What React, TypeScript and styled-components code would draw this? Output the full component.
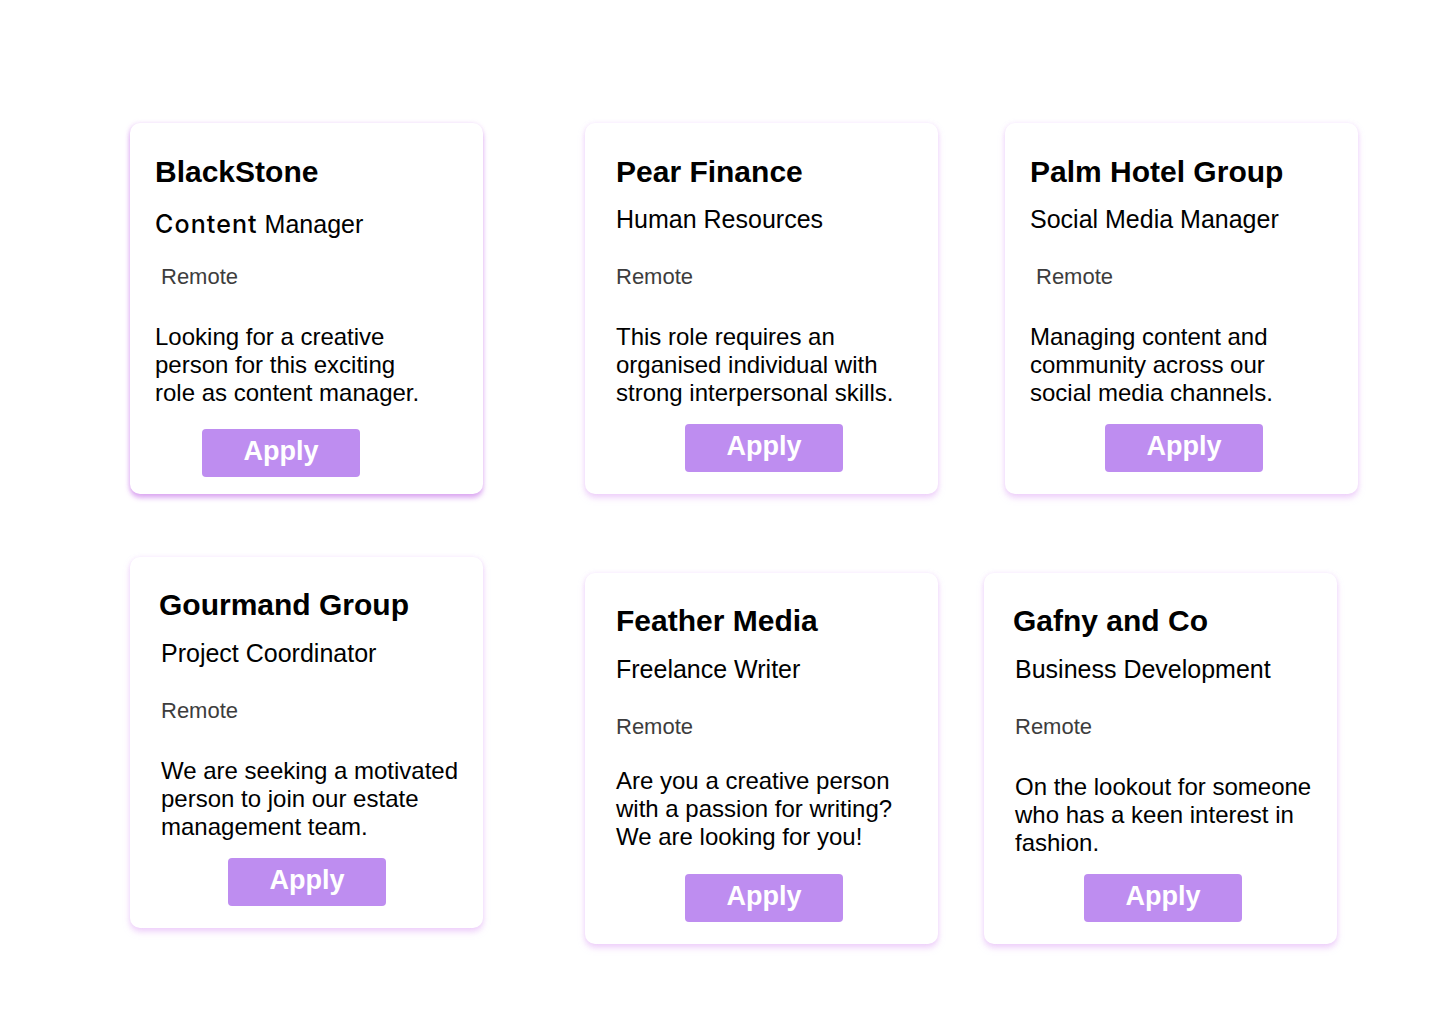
import React from "react";
import styled, { createGlobalStyle } from "styled-components";

const GlobalStyle = createGlobalStyle`
  html, body { margin: 0; padding: 0; background: #ffffff; }
  body { font-family: "Liberation Sans", Arial, sans-serif; color: #000; }
`;

const Page = styled.div`
  width: 1440px;
  height: 1024px;
  display: flex;
  flex-direction: column;
  box-sizing: border-box;
  padding-top: 123px;
  overflow: hidden;
`;

const Row = styled.div<{ $top: number }>`
  display: flex;
  align-items: flex-start;
  margin-top: ${(p) => p.$top}px;
`;

const Card = styled.div<{ $left: number; $top: number; $strong?: boolean }>`
  flex: none;
  width: 353px;
  height: 371px;
  margin-left: ${(p) => p.$left}px;
  margin-top: ${(p) => p.$top}px;
  box-sizing: border-box;
  background: #ffffff;
  border-radius: 10px;
  display: flex;
  flex-direction: column;
  align-items: flex-start;
  box-shadow: ${(p) =>
    p.$strong
      ? "0 4px 5px rgba(205, 130, 235, 0.65), -1px 0 4px rgba(225, 180, 245, 0.45)"
      : "0 4px 6px rgba(225, 175, 245, 0.55), 0 0 4px rgba(230, 195, 248, 0.35)"};
`;

const Title = styled.h2<{ $x: number; $y: number }>`
  margin: ${(p) => p.$y}px 0 0 ${(p) => p.$x}px;
  font-family: "Liberation Sans", Arial, sans-serif;
  font-weight: 700;
  font-size: 30px;
  line-height: 36px;
  color: #000;
  white-space: nowrap;
`;

const Role = styled.div<{ $x: number; $y: number }>`
  margin: ${(p) => p.$y}px 0 0 ${(p) => p.$x}px;
  font-size: 25px;
  line-height: 28px;
  color: #000;
  white-space: nowrap;
`;

const RoleAccent = styled.span`
  font-family: "Inter", "Liberation Sans", sans-serif;
  font-weight: 500;
  font-size: 25px;
  letter-spacing: 1.1px;
`;

const Location = styled.div<{ $x: number; $y: number }>`
  margin: ${(p) => p.$y}px 0 0 ${(p) => p.$x}px;
  font-size: 22px;
  line-height: 26px;
  color: #3d3d3d;
`;

const Description = styled.p<{ $x: number; $y: number }>`
  margin: ${(p) => p.$y}px 0 0 ${(p) => p.$x}px;
  font-size: 24px;
  line-height: 28px;
  color: #000;
  white-space: pre-line;
`;

const ApplyButton = styled.button<{ $x: number; $y: number }>`
  margin: ${(p) => p.$y}px 0 0 ${(p) => p.$x}px;
  width: 158px;
  height: 48px;
  border: none;
  border-radius: 4px;
  background: #be8df0;
  color: #ffffff;
  font-family: "Liberation Sans", Arial, sans-serif;
  font-weight: 700;
  font-size: 27px;
  line-height: 45px;
  padding: 0 0 3px;
  cursor: pointer;
`;

type Job = {
  company: string;
  role: React.ReactNode;
  desc: string;
  left: number;
  top: number;
  strong?: boolean;
  tx: number;
  ty: number;
  rx: number;
  ry: number;
  lx: number;
  ly: number;
  dx: number;
  dy: number;
  bx: number;
  by: number;
};

const row1: Job[] = [
  {
    company: "BlackStone",
    role: (
      <>
        <RoleAccent>Content</RoleAccent> Manager
      </>
    ),
    desc: "Looking for a creative\nperson for this exciting\nrole as content manager.",
    left: 130,
    top: 0,
    strong: true,
    tx: 25, ty: 31,
    rx: 25, ry: 20,
    lx: 31, ly: 26,
    dx: 25, dy: 33,
    bx: 72, by: 22,
  },
  {
    company: "Pear Finance",
    role: "Human Resources",
    desc: "This role requires an\norganised individual with\nstrong interpersonal skills.",
    left: 102,
    top: 0,
    tx: 31, ty: 31,
    rx: 31, ry: 15,
    lx: 31, ly: 31,
    dx: 31, dy: 33,
    bx: 100, by: 17,
  },
  {
    company: "Palm Hotel Group",
    role: "Social Media Manager",
    desc: "Managing content and\ncommunity across our\nsocial media channels.",
    left: 67,
    top: 0,
    tx: 25, ty: 31,
    rx: 25, ry: 15,
    lx: 31, ly: 31,
    dx: 25, dy: 33,
    bx: 100, by: 17,
  },
];

const row2: Job[] = [
  {
    company: "Gourmand Group",
    role: "Project Coordinator",
    desc: "We are seeking a motivated\nperson to join our estate\nmanagement team.",
    left: 130,
    top: 0,
    tx: 29, ty: 30,
    rx: 31, ry: 16,
    lx: 31, ly: 31,
    dx: 31, dy: 33,
    bx: 98, by: 17,
  },
  {
    company: "Feather Media",
    role: "Freelance Writer",
    desc: "Are you a creative person\nwith a passion for writing?\nWe are looking for you!",
    left: 102,
    top: 16,
    tx: 31, ty: 30,
    rx: 31, ry: 16,
    lx: 31, ly: 31,
    dx: 31, dy: 27,
    bx: 100, by: 23,
  },
  {
    company: "Gafny and Co",
    role: "Business Development",
    desc: "On the lookout for someone\nwho has a keen interest in\nfashion.",
    left: 46,
    top: 16,
    tx: 29, ty: 30,
    rx: 31, ry: 16,
    lx: 31, ly: 31,
    dx: 31, dy: 33,
    bx: 100, by: 17,
  },
];

function JobCard({ job }: { job: Job }) {
  return (
    <Card $left={job.left} $top={job.top} $strong={job.strong}>
      <Title $x={job.tx} $y={job.ty}>{job.company}</Title>
      <Role $x={job.rx} $y={job.ry}>{job.role}</Role>
      <Location $x={job.lx} $y={job.ly}>Remote</Location>
      <Description $x={job.dx} $y={job.dy}>{job.desc}</Description>
      <ApplyButton $x={job.bx} $y={job.by}>Apply</ApplyButton>
    </Card>
  );
}

export default function App() {
  return (
    <>
      <GlobalStyle />
      <Page>
        <Row $top={0}>
          {row1.map((j) => (
            <JobCard key={j.company} job={j} />
          ))}
        </Row>
        <Row $top={63}>
          {row2.map((j) => (
            <JobCard key={j.company} job={j} />
          ))}
        </Row>
      </Page>
    </>
  );
}
